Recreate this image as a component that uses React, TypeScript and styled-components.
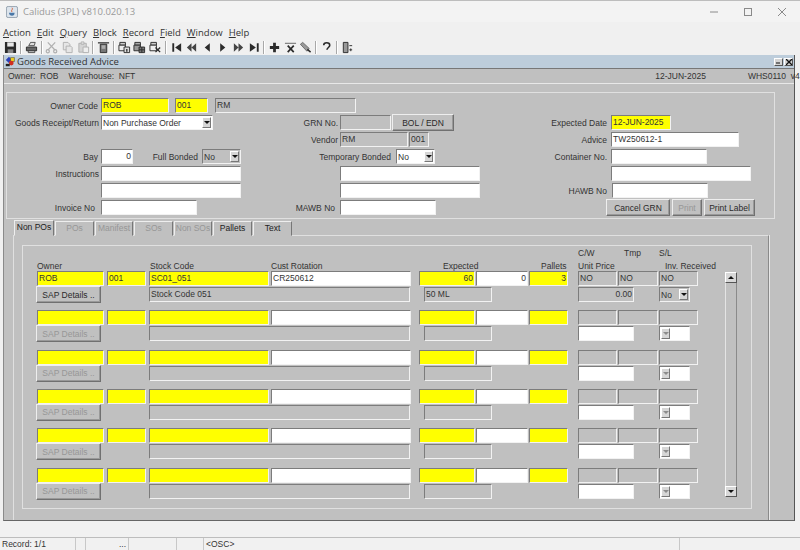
import React from 'react';
import styled, { createGlobalStyle } from 'styled-components';

const GlobalStyle = createGlobalStyle`
  html, body { margin: 0; padding: 0; background: #f0f0f0; }
  body { font-family: "Liberation Sans", Arial, sans-serif; font-size: 9.5px; color: #2a2a2a; }
`;

const Page = styled.div`
  width: 800px;
  height: 550px;
  display: flex;
  flex-direction: column;
  overflow: hidden;
  background: #f0f0f0;
`;

const TitleBar = styled.div`
  height: 22px;
  flex: none;
  display: flex;
  align-items: center;
  padding: 0 13px 0 6px;
  background: #f3f3f3;
  border-top: 1px solid #bdbdbd;
  box-sizing: border-box;
  color: #9a9a9a;
  font-family: "Open Sans", sans-serif;
  font-size: 9.5px;
`;

const TitleText = styled.span`
  margin-left: 5px;
  flex: 1;
`;

const WindowControls = styled.div`
  display: flex;
  gap: 24px;
  color: #8a8a8a;
`;

const MenuBar = styled.div`
  height: 17px;
  flex: none;
  display: flex;
  align-items: flex-end;
  padding-left: 3px;
  gap: 6px;
  font-family: "Open Sans", sans-serif;
  font-size: 9.5px;
  color: #333;
`;

const MenuItem = styled.span`
  &::first-letter { text-decoration: underline; }
`;

const Toolbar = styled.div`
  height: 16px;
  flex: none;
  display: flex;
  align-items: center;
  padding-left: 3px;
`;

const ToolIcon = styled.span`
  width: 15.6px;
  height: 14px;
  flex: none;
  display: flex;
  align-items: center;
  justify-content: center;
`;

const ToolSep = styled.span`
  width: 1px;
  height: 13px;
  flex: none;
  margin: 0 1.5px;
  background: #a8a8a8;
  border-right: 1px solid #fff;
`;

const MdiWindow = styled.div`
  height: 466px;
  flex: none;
  display: flex;
  flex-direction: column;
  box-sizing: border-box;
  margin: 0 5px 0 3px;
  background: #c0c0c0;
  border-left: 1px solid #8a8a8a;
  border-right: 1px solid #555;
  border-bottom: 1px solid #666;
`;

const InnerTitle = styled.div`
  height: 13px;
  flex: none;
  display: flex;
  align-items: center;
  padding: 0 1px 0 1px;
  background: #bdcddb;
  border-bottom: 1px solid #777;
  font-family: "Open Sans", sans-serif;
  font-size: 9.5px;
  color: #333;
`;

const InnerTitleText = styled.span`
  flex: 1;
  margin-left: 1px;
`;

const MiniButton = styled.span`
  width: 9px;
  height: 8px;
  margin-left: 1px;
  box-sizing: border-box;
  display: flex;
  align-items: center;
  justify-content: center;
  background: #d4d4d4;
  border: 1px solid;
  border-color: #fff #555 #555 #fff;
`;

const InfoStrip = styled.div`
  height: 14px;
  flex: none;
  display: flex;
  align-items: center;
  padding: 0 7px 0 4px;
  border-bottom: 1px solid #e8e8e8;
  font-size: 8.5px;
  color: #333;
`;

const InfoText = styled.span<{ $ml?: number }>`
  margin-left: ${(p) => p.$ml ?? 0}px;
  white-space: pre;
`;

const HeaderPanel = styled.div`
  margin: 8px 19px 0 2px;
  height: 127px;
  flex: none;
  box-sizing: border-box;
  padding-top: 4px;
  display: flex;
  border: 1px solid #e0e0e0;
`;

const FormColumn = styled.div<{ $w: number }>`
  width: ${(p) => p.$w}px;
  flex: none;
  display: grid;
  grid-auto-rows: 17px;
`;

const FormRow = styled.div`
  display: flex;
  align-items: center;
  height: 17px;
`;

const Label = styled.span<{ $w: number; $pr?: number }>`
  width: ${(p) => p.$w}px;
  flex: none;
  box-sizing: border-box;
  padding-right: ${(p) => p.$pr ?? 2}px;
  text-align: right;
  white-space: nowrap;
  font-size: 8.5px;
  color: #333;
`;

type Tone = 'yellow' | 'white' | 'grey';
const toneColor: Record<Tone, string> = { yellow: '#ffff00', white: '#ffffff', grey: '#c0c0c0' };

const Field = styled.div<{ $w: number; $tone?: Tone; $ml?: number; $right?: boolean }>`
  width: ${(p) => p.$w}px;
  height: 15px;
  flex: none;
  box-sizing: border-box;
  margin-left: ${(p) => p.$ml ?? 0}px;
  padding: 0 1px;
  background: ${(p) => toneColor[p.$tone ?? 'white']};
  border: 1px solid;
  border-color: #7c7c7c #f2f2f2 #f2f2f2 #7c7c7c;
  line-height: 13px;
  font-size: 8.5px;
  color: #333;
  white-space: nowrap;
  overflow: hidden;
  text-align: ${(p) => (p.$right ? 'right' : 'left')};
`;

const SelectBox = styled.div<{ $w: number; $tone?: Tone; $ml?: number }>`
  width: ${(p) => p.$w}px;
  height: 15px;
  flex: none;
  box-sizing: border-box;
  margin-left: ${(p) => p.$ml ?? 0}px;
  display: flex;
  align-items: center;
  justify-content: space-between;
  padding: 0 1px 0 1px;
  background: ${(p) => toneColor[p.$tone ?? 'white']};
  border: 1px solid;
  border-color: #7c7c7c #f2f2f2 #f2f2f2 #7c7c7c;
  font-size: 8.5px;
  color: #333;
  white-space: nowrap;
`;

const SelectArrow = styled.span<{ $off?: boolean }>`
  width: 9px;
  height: 11px;
  flex: none;
  box-sizing: border-box;
  display: flex;
  align-items: center;
  justify-content: center;
  background: #d6d6d6;
  border: 1px solid;
  border-color: #fff #777 #777 #fff;

  &::after {
    content: '';
    border-left: 3px solid transparent;
    border-right: 3px solid transparent;
    border-top: 3px solid ${(p) => (p.$off ? '#8c8c8c' : '#111')};
  }
`;

const RaisedButton = styled.button<{ $w: number; $ml?: number; $off?: boolean }>`
  width: ${(p) => p.$w}px;
  height: 17px;
  flex: none;
  box-sizing: border-box;
  margin: 0 0 0 ${(p) => p.$ml ?? 0}px;
  padding: 0;
  background: #c0c0c0;
  border: 1px solid;
  border-color: #eeeeee #707070 #707070 #eeeeee;
  box-shadow: inset -1px -1px 0 #999;
  font-family: inherit;
  font-size: 8.5px;
  color: ${(p) => (p.$off ? '#979797' : '#2a2a2a')};
`;

const TabStrip = styled.div`
  margin: 1px 0 0 10px;
  height: 16px;
  flex: none;
  display: flex;
  align-items: flex-end;
  gap: 1px;
`;

const Tab = styled.div<{ $w: number; $active?: boolean; $off?: boolean }>`
  width: ${(p) => p.$w}px;
  height: ${(p) => (p.$active ? 16 : 15)}px;
  box-sizing: border-box;
  flex: none;
  text-align: center;
  line-height: 13px;
  font-size: 8.5px;
  font-weight: ${(p) => (p.$off || p.$active ? 400 : 400)};
  color: ${(p) => (p.$off ? '#979797' : '#222')};
  border: 1px solid;
  border-color: #eeeeee #777 transparent #eeeeee;
  position: relative;
  background: #c0c0c0;
`;

const TabBody = styled.div`
  flex: 1;
  min-height: 0;
  margin: -1px 25px 0 9px;
  box-sizing: border-box;
  padding: 9px 16px 11px 8px;
  border: 1px solid #e0e0e0;
  border-right-color: #8a8a8a;
  border-bottom: none;
  box-shadow: 1px 0 0 #e8e8e8;
`;

const InnerBox = styled.div`
  height: 100%;
  box-sizing: border-box;
  padding-left: 14px;
  border: 1px solid #e0e0e0;
`;

const ColumnHeads = styled.div`
  height: 25px;
  padding-top: 1px;
  box-sizing: border-box;
`;

const HeadLine = styled.div`
  height: 12.5px;
  display: flex;
  align-items: center;
`;

const Head = styled.span<{ $w: number; $center?: boolean; $ml?: number }>`
  width: ${(p) => p.$w}px;
  margin-left: ${(p) => p.$ml ?? 0}px;
  flex: none;
  font-size: 8.5px;
  color: #333;
  white-space: nowrap;
`;

const Records = styled.div`
  display: flex;
`;

const RecordList = styled.div`
  width: 688px;
  flex: none;
  display: grid;
  grid-auto-rows: 39.33px;
`;

const Record = styled.div`
  display: flex;
  flex-direction: column;
  gap: 1px;
`;

const RecordLine = styled.div`
  display: flex;
  align-items: center;
  height: 15px;
`;

const ScrollTrack = styled.div`
  width: 12px;
  height: 225px;
  margin-top: 1px;
  flex: none;
  display: flex;
  flex-direction: column;
  justify-content: space-between;
  background: #c0c0c0;
  border-right: 1px solid #8a8a8a;
  border-left: 1px solid #e4e4e4;
  box-sizing: border-box;
`;

const ScrollButton = styled.span<{ $down?: boolean }>`
  height: 11px;
  margin: 0 -1px;
  display: flex;
  align-items: center;
  justify-content: center;
  background: #d8d8d8;
  border: 1px solid;
  border-color: #fff #555 #555 #fff;
  box-sizing: border-box;

  &::after {
    content: '';
    border-left: 3px solid transparent;
    border-right: 3px solid transparent;
    ${(p) => (p.$down ? 'border-top: 3px solid #111;' : 'border-bottom: 3px solid #111;')}
  }
`;

const MessageRow = styled.div`
  height: 17px;
  flex: none;
  background: #f1f1f1;
  border-bottom: 1px solid #bdbdbd;
  box-sizing: border-box;
`;

const StatusRow = styled.div`
  height: 12px;
  flex: none;
  display: flex;
  background: #f1f1f1;
  font-size: 8.5px;
  color: #333;
`;

const StatusCell = styled.span<{ $w: number; $right?: boolean }>`
  width: ${(p) => p.$w}px;
  flex: none;
  box-sizing: border-box;
  padding: 0 2px;
  border-right: 1px solid #c8c8c8;
  line-height: 12px;
  text-align: ${(p) => (p.$right ? 'right' : 'left')};
`;

const Svg = ({ children, size = 14 }: { children: React.ReactNode; size?: number }) => (
  <svg width={size} height={size} viewBox="0 0 14 14">
    {children}
  </svg>
);

const dim = '#b0b0b0';
const ink = '#2b2b2b';

const toolIcons: Record<string, React.ReactNode> = {
  save: (
    <>
      <path d="M1 1h11l1 1v11H1z" fill={ink} />
      <rect x="3.5" y="1.5" width="7" height="4.5" fill="#e8e8e8" />
      <rect x="4" y="9" width="6" height="4" fill="#888" />
    </>
  ),
  print: (
    <>
      <path d="M4 5 6 1.5h5L10 5z" fill="#ddd" stroke={ink} strokeWidth=".8" />
      <path d="M1.5 6.5h11v4h-11z" fill="#666" stroke={ink} />
      <path d="M3.5 10.5h7v2h-7z" fill="#ccc" stroke={ink} strokeWidth=".8" />
    </>
  ),
  cut: (
    <g fill="none" stroke={dim} strokeWidth="1.3">
      <path d="M3 1.5 11 10M11 1.5 3 10" />
      <circle cx="3" cy="11" r="1.7" />
      <circle cx="11" cy="11" r="1.7" />
    </g>
  ),
  copy: (
    <g fill="#e6e6e6" stroke={dim}>
      <path d="M2.5 1.5h5l2 2v6h-7z" />
      <path d="M5.5 5.5h5l1.5 1.5v5.5h-6.500z" />
    </g>
  ),
  paste: (
    <g stroke={dim}>
      <path d="M2 2.500h8v9.500H2z" fill="#d4d4d4" />
      <path d="M4.500 1h3v2.500h-3z" fill="#e6e6e6" />
      <path d="M6.500 6.500h6v6h-6z" fill="#eee" />
    </g>
  ),
  clear: (
    <>
      <path d="M1 2h12" stroke={ink} strokeWidth="1.300" />
      <path d="M3.500 3.500h7v9h-7z" fill="#777" stroke={ink} />
      <path d="M5 5.500h4M5 7.500h4" stroke="#ddd" />
    </>
  ),
  enter: (
    <g stroke={ink}>
      <path d="M2 1.500h6v3H2z" fill="#ccc" />
      <path d="M1 4.500h7v6H1z" fill="#eee" />
      <path d="M6.500 6.500h6v6h-6z" fill="#ddd" />
      <path d="M9.500 11.500v-3" strokeWidth="1.400" />
    </g>
  ),
  execute: (
    <g stroke={ink}>
      <path d="M2 1.500h6v3H2z" fill="#aaa" />
      <path d="M1 4.500h7v6H1z" fill="#999" />
      <path d="M6.500 6.500h6v6h-6zM6.500 9.500h6M9.500 6.500v6" fill="#777" />
    </g>
  ),
  cancel: (
    <g stroke={ink}>
      <path d="M2 1.500h6v3H2z" fill="#ccc" />
      <path d="M1 4.500h7v6H1z" fill="#eee" />
      <path d="m7 7 5 5m0-5-5 5" strokeWidth="1.400" />
    </g>
  ),
  first: <path d="M2.500 2.500h2v9h-2zM12 2.500v9L5.500 7z" fill={ink} />,
  prevSet: <path d="M7 2.500v9L2 7zM12 2.500v9L7 7z" fill="#444" />,
  prev: <path d="M9.500 2.500v9L4 7z" fill={ink} />,
  next: <path d="M4.500 2.500v9L10 7z" fill={ink} />,
  nextSet: <path d="M2 2.500v9L7 7zM7 2.500v9l5-4.500z" fill="#444" />,
  last: <path d="M9.500 2.500h2v9h-2zM2 2.500v9L8.500 7z" fill={ink} />,
  plus: <path d="M5.500 2h3v3.500H12v3H8.500V12h-3V8.500H2v-3h3.500z" fill={ink} />,
  remove: (
    <>
      <path d="M1 2.500h12" stroke="#777" strokeWidth="1.200" />
      <path d="m4 5 6.500 7m0-7L4 12" stroke={ink} strokeWidth="1.800" />
    </>
  ),
  tag: (
    <>
      <path d="M1.500 3.500 4 1.500l7 6.500-2.500 3z" fill="#999" stroke="#555" strokeWidth=".8" />
      <path d="m9 9 3.500 3" stroke={ink} strokeWidth="1.600" />
    </>
  ),
  help: (
    <path
      d="M4 4.500C4 1 10.500 1 10.500 4.500 10.500 7 7.500 7 7.500 9.500"
      fill="none"
      stroke={ink}
      strokeWidth="1.700"
    />
  ),
  exit: (
    <>
      <path d="M2.500 1.500h5v11h-5z" fill="#999" stroke={ink} />
      <path d="M9 5h3M9 9.500h3M10.500 8v3" stroke={ink} />
    </>
  ),
};

const toolLayout = [
  'save', '|', 'print', '|', 'cut', 'copy', 'paste', '|', 'clear', '|', 'enter', 'execute', 'cancel', '|',
  'first', 'prevSet', 'prev', 'next', 'nextSet', 'last', '|', 'plus', 'remove', 'tag', '|', 'help', '|', 'exit',
];

const AppLogo = () => (
  <Svg size={12}>
    <rect x=".5" y=".5" width="13" height="13" rx="2" fill="#dce4ec" stroke="#8a98a6" />
    <path d="M7 2c2 2-2 3 0 5" fill="none" stroke="#d2542a" />
    <path d="M3.500 8h6.500c0 2-1 3.500-3 3.500S3.500 10 3.500 8z" fill="#4a78a8" />
  </Svg>
);

const FormIcon = () => (
  <Svg size={11}>
    <path d="M1 5 5 1l4 4-4 4z" fill="#2a3fb8" />
    <path d="M7 2h5v5H7z" fill="#f0d020" stroke="#333" strokeWidth=".6" />
    <circle cx="8" cy="9" r="3" fill="#d03020" />
    <path d="M1 10h5v3H1z" fill="#222" />
  </Svg>
);

const menus = ['Action', 'Edit', 'Query', 'Block', 'Record', 'Field', 'Window', 'Help'];

const tabs = [
  { name: 'Non POs', w: 40, active: true },
  { name: 'POs', w: 39, off: true },
  { name: 'Manifest', w: 38, off: true },
  { name: 'SOs', w: 39, off: true },
  { name: 'Non SOs', w: 38, off: true },
  { name: 'Pallets', w: 39 },
  { name: 'Text', w: 39 },
];

type Row = {
  owner?: string;
  site?: string;
  stock?: string;
  rotation?: string;
  expected?: string;
  received?: string;
  pallets?: string;
  cw?: string;
  tmp?: string;
  sl?: string;
  description?: string;
  size?: string;
  price?: string;
  inv?: string;
};

const rows: Row[] = [
  {
    owner: 'ROB',
    site: '001',
    stock: 'SC01_051',
    rotation: 'CR250612',
    expected: '60',
    received: '0',
    pallets: '3',
    cw: 'NO',
    tmp: 'NO',
    sl: 'NO',
    description: 'Stock Code 051',
    size: '50 ML',
    price: '0.00',
    inv: 'No',
  },
  {},
  {},
  {},
  {},
  {},
];

const StockRecord = ({ row }: { row: Row }) => {
  const filled = Boolean(row.owner);
  return (
    <Record>
      <RecordLine>
        <Field $w={67} $tone="yellow">{row.owner}</Field>
        <Field $w={39} $ml={3} $tone="yellow">{row.site}</Field>
        <Field $w={120} $ml={3} $tone="yellow">{row.stock}</Field>
        <Field $w={140} $ml={2}>{row.rotation}</Field>
        <Field $w={56} $ml={8} $tone="yellow" $right>{row.expected}</Field>
        <Field $w={52} $ml={1} $right>{row.received}</Field>
        <Field $w={39} $ml={1} $tone="yellow" $right>{row.pallets}</Field>
        <Field $w={39} $ml={10} $tone="grey">{row.cw}</Field>
        <Field $w={40} $ml={1} $tone="grey">{row.tmp}</Field>
        <Field $w={39} $ml={1} $tone="grey">{row.sl}</Field>
      </RecordLine>
      <RecordLine>
        <RaisedButton $w={65} $ml={-1} $off={!filled}>SAP Details ..</RaisedButton>
        <Field $w={261} $ml={48} $tone="grey">{row.description}</Field>
        <Field $w={68} $ml={14} $tone="grey">{row.size}</Field>
        <Field $w={56} $ml={86} $tone={filled ? 'grey' : 'white'} $right>{row.price}</Field>
        <SelectBox $w={31} $ml={25} $tone={filled ? 'grey' : 'white'}>
          {row.inv}
          <SelectArrow $off={!filled} />
        </SelectBox>
      </RecordLine>
    </Record>
  );
};

export default function App() {
  return (
    <Page>
      <GlobalStyle />
      <TitleBar>
        <AppLogo />
        <TitleText>Calidus (3PL) v810.020.13</TitleText>
        <WindowControls>
          <svg width="10" height="10" viewBox="0 0 10 10">
            <path d="M1 5h8" stroke="currentColor" />
          </svg>
          <svg width="10" height="10" viewBox="0 0 10 10">
            <rect x="1.500" y="1.500" width="7" height="7" fill="none" stroke="currentColor" />
          </svg>
          <svg width="10" height="10" viewBox="0 0 10 10">
            <path d="m1 1 8 8m0-8-8 8" stroke="currentColor" />
          </svg>
        </WindowControls>
      </TitleBar>
      <MenuBar>
        {menus.map((m) => (
          <MenuItem key={m}>{m}</MenuItem>
        ))}
      </MenuBar>
      <Toolbar>
        {toolLayout.map((t, i) =>
          t === '|' ? (
            <ToolSep key={i} />
          ) : (
            <ToolIcon key={i}>
              <Svg size={13}>{toolIcons[t]}</Svg>
            </ToolIcon>
          ),
        )}
      </Toolbar>
      <MdiWindow>
        <InnerTitle>
          <FormIcon />
          <InnerTitleText>Goods Received Advice</InnerTitleText>
          <MiniButton>
            <svg width="5" height="5" viewBox="0 0 5 5">
              <path d="M0 4h4" stroke="#111" />
            </svg>
          </MiniButton>
          <MiniButton>
            <svg width="6" height="6" viewBox="0 0 6 6">
              <path d="m0 0 6 6m0-6-6 6" stroke="#111" strokeWidth="1.300" />
            </svg>
          </MiniButton>
        </InnerTitle>
        <InfoStrip>
          <InfoText>Owner:  ROB</InfoText>
          <InfoText $ml={10}>Warehouse:  NFT</InfoText>
          <InfoText $ml={520}>12-JUN-2025</InfoText>
          <InfoText $ml={42}>WHS0110  v4.98</InfoText>
        </InfoStrip>
        <HeaderPanel>
          <FormColumn $w={252}>
            <FormRow>
              <Label $w={94} $pr={3}>Owner Code</Label>
              <Field $w={68} $tone="yellow">ROB</Field>
              <Field $w={33} $ml={6} $tone="yellow">001</Field>
              <Field $w={141} $ml={7} $tone="grey">RM</Field>
            </FormRow>
            <FormRow>
              <Label $w={94}>Goods Receipt/Return</Label>
              <SelectBox $w={112}>
                Non Purchase Order
                <SelectArrow />
              </SelectBox>
            </FormRow>
            <FormRow />
            <FormRow>
              <Label $w={94} $pr={3}>Bay</Label>
              <Field $w={32} $right>0</Field>
              <Label $w={69} $pr={4}>Full Bonded</Label>
              <SelectBox $w={39} $tone="grey">
                No
                <SelectArrow />
              </SelectBox>
            </FormRow>
            <FormRow>
              <Label $w={94}>Instructions</Label>
              <Field $w={140} />
            </FormRow>
            <FormRow>
              <Label $w={94} />
              <Field $w={140} />
            </FormRow>
            <FormRow>
              <Label $w={94} $pr={6}>Invoice No</Label>
              <Field $w={96} />
            </FormRow>
          </FormColumn>
          <FormColumn $w={264}>
            <FormRow />
            <FormRow>
              <Label $w={81}>GRN No.</Label>
              <Field $w={51} $tone="grey" />
              <RaisedButton $w={62} $ml={1}>BOL / EDN</RaisedButton>
            </FormRow>
            <FormRow>
              <Label $w={81}>Vendor</Label>
              <Field $w={68} $tone="grey">RM</Field>
              <Field $w={20} $ml={1} $tone="grey">001</Field>
            </FormRow>
            <FormRow>
              <Label $w={137} $pr={5}>Temporary Bonded</Label>
              <SelectBox $w={39}>
                No
                <SelectArrow />
              </SelectBox>
            </FormRow>
            <FormRow>
              <Label $w={81} />
              <Field $w={140} />
            </FormRow>
            <FormRow>
              <Label $w={81} />
              <Field $w={140} />
            </FormRow>
            <FormRow>
              <Label $w={81} $pr={5}>MAWB No</Label>
              <Field $w={96} />
            </FormRow>
          </FormColumn>
          <FormColumn $w={240}>
            <FormRow />
            <FormRow>
              <Label $w={88} $pr={4}>Expected Date</Label>
              <Field $w={60} $tone="yellow">12-JUN-2025</Field>
            </FormRow>
            <FormRow>
              <Label $w={88} $pr={4}>Advice</Label>
              <Field $w={128}>TW250612-1</Field>
            </FormRow>
            <FormRow>
              <Label $w={88} $pr={4}>Container No.</Label>
              <Field $w={96} />
            </FormRow>
            <FormRow>
              <Label $w={88} />
              <Field $w={140} />
            </FormRow>
            <FormRow>
              <Label $w={88} $pr={4}>HAWB No</Label>
              <Field $w={96} $ml={1} />
            </FormRow>
            <FormRow>
              <RaisedButton $w={64} $ml={83}>Cancel GRN</RaisedButton>
              <RaisedButton $w={30} $ml={2} $off>Print</RaisedButton>
              <RaisedButton $w={51} $ml={2}>Print Label</RaisedButton>
            </FormRow>
          </FormColumn>
        </HeaderPanel>
        <TabStrip>
          {tabs.map((t) => (
            <Tab key={t.name} $w={t.w} $active={t.active} $off={t.off}>
              {t.name}
            </Tab>
          ))}
        </TabStrip>
        <TabBody>
          <InnerBox>
            <ColumnHeads>
              <HeadLine>
                <Head $w={46} $ml={541}>C/W</Head>
                <Head $w={35}>Tmp</Head>
                <Head $w={30}>S/L</Head>
              </HeadLine>
              <HeadLine>
                <Head $w={113}>Owner</Head>
                <Head $w={121}>Stock Code</Head>
                <Head $w={172}>Cust Rotation</Head>
                <Head $w={98}>Expected</Head>
                <Head $w={37}>Pallets</Head>
                <Head $w={87}>Unit Price</Head>
                <Head $w={50}>Inv. Received</Head>
              </HeadLine>
            </ColumnHeads>
            <Records>
              <RecordList>
                {rows.map((row, i) => (
                  <StockRecord key={i} row={row} />
                ))}
              </RecordList>
              <ScrollTrack>
                <ScrollButton />
                <ScrollButton $down />
              </ScrollTrack>
            </Records>
          </InnerBox>
        </TabBody>
      </MdiWindow>
      <MessageRow />
      <StatusRow>
        <StatusCell $w={76}>Record: 1/1</StatusCell>
        <StatusCell $w={10} />
        <StatusCell $w={43} $right>...</StatusCell>
        <StatusCell $w={48} />
        <StatusCell $w={27} />
        <StatusCell $w={476}>&lt;OSC&gt;</StatusCell>
      </StatusRow>
    </Page>
  );
}
